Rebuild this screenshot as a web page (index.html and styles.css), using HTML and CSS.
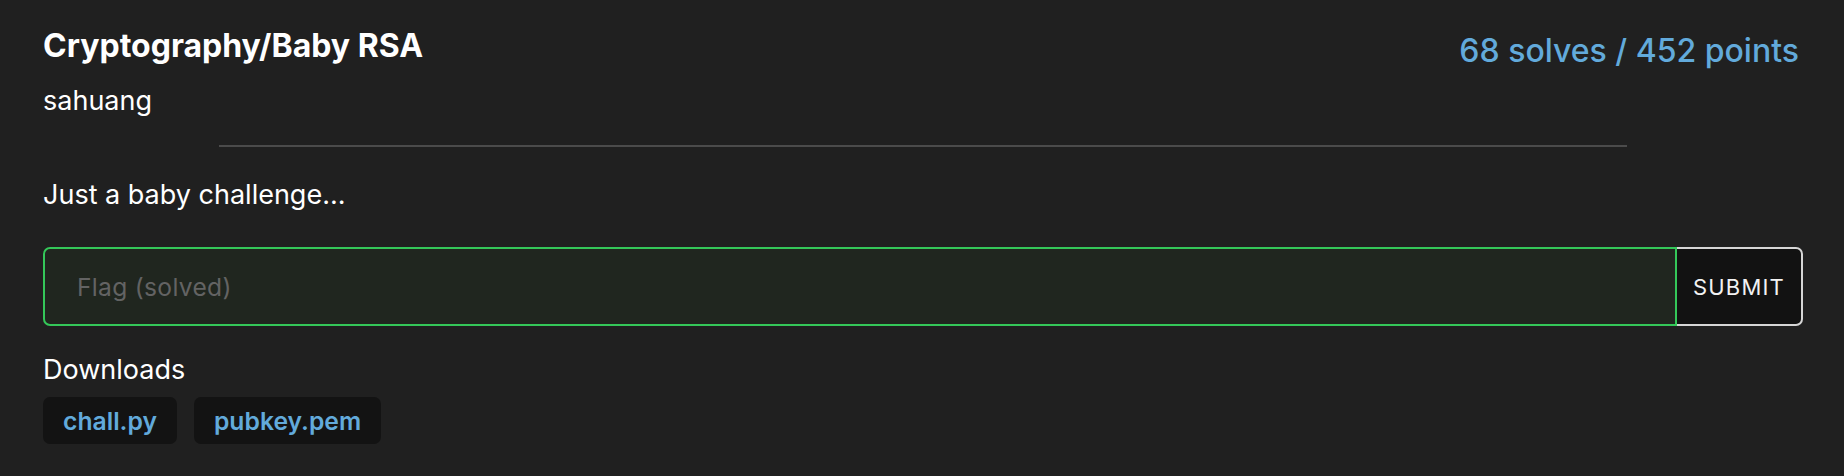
FILE: index.html
```html
<!DOCTYPE html>
<html lang="en">
<head>
<meta charset="utf-8">
<title>Cryptography/Baby RSA</title>
<link rel="stylesheet" href="styles.css">
</head>
<body>
<main class="challenge">
  <header class="challenge-head">
    <div class="head-main">
      <h1 class="title">Cryptography/Baby RSA</h1>
      <div class="author">sahuang</div>
    </div>
    <div class="stats">68 solves / 452 points</div>
  </header>
  <hr class="divider">
  <p class="description">Just a baby challenge...</p>
  <form class="flag-form">
    <input class="flag-input" type="text" placeholder="Flag (solved)">
    <button class="submit-btn" type="button">Submit</button>
  </form>
  <div class="downloads-label">Downloads</div>
  <div class="downloads">
    <a class="download" href="#">chall.py</a>
    <a class="download" href="#">pubkey.pem</a>
  </div>
</main>
</body>
</html>
```
FILE: styles.css
```css
html, body {
  margin: 0;
  padding: 0;
  background: #202020;
}

body {
  font-family: Inter, "Noto Sans", "Liberation Sans", sans-serif;
  color: #ffffff;
}

.challenge {
  padding: 28px 41px 0 43px;
}

.challenge-head {
  display: flex;
  justify-content: space-between;
  align-items: flex-start;
}

.title {
  margin: 0;
  font-size: 32px;
  line-height: 36px;
  font-weight: 700;
}

.author {
  margin-top: 19px;
  font-size: 27px;
  line-height: 36px;
  font-weight: 400;
}

.stats {
  margin: 5px 4px 0 0;
  font-size: 32px;
  line-height: 36px;
  font-weight: 500;
  color: #62aadb;
}

.divider {
  width: 80%;
  margin: 26px auto 0;
  border: none;
  height: 2px;
  background: #4b4b4b;
}

.description {
  margin: 30px 0 0;
  font-size: 27px;
  line-height: 36px;
}

.flag-form {
  display: flex;
  margin-top: 34px;
  height: 79px;
}

.flag-input {
  flex: 1;
  min-width: 0;
  box-sizing: border-box;
  height: 79px;
  margin: 0;
  padding: 0 0 0 32px;
  border: 2px solid #34c759;
  border-radius: 7px 0 0 7px;
  background: #20261f;
  color: #fff;
  font-family: inherit;
  font-size: 24.6px;
  outline: none;
}

.flag-input::placeholder {
  color: #636363;
  letter-spacing: 0.3px;
}

.submit-btn {
  box-sizing: border-box;
  height: 79px;
  margin: 0;
  padding: 0 16px;
  border: 2px solid #d6d6d6;
  border-left: none;
  border-radius: 0 7px 7px 0;
  background: #121212;
  color: #f2f2f2;
  font-family: inherit;
  font-size: 22px;
  font-weight: 400;
  letter-spacing: 1.2px;
  text-transform: uppercase;
}

.downloads-label {
  margin-top: 26px;
  font-size: 27px;
  line-height: 36px;
}

.downloads {
  display: flex;
  gap: 17px;
  margin-top: 9px;
}

.download {
  display: flex;
  align-items: center;
  height: 47px;
  padding: 0 20px;
  border-radius: 7px;
  background: #131313;
  color: #62aadb;
  font-size: 24.7px;
  font-weight: 600;
  text-decoration: none;
}
```
